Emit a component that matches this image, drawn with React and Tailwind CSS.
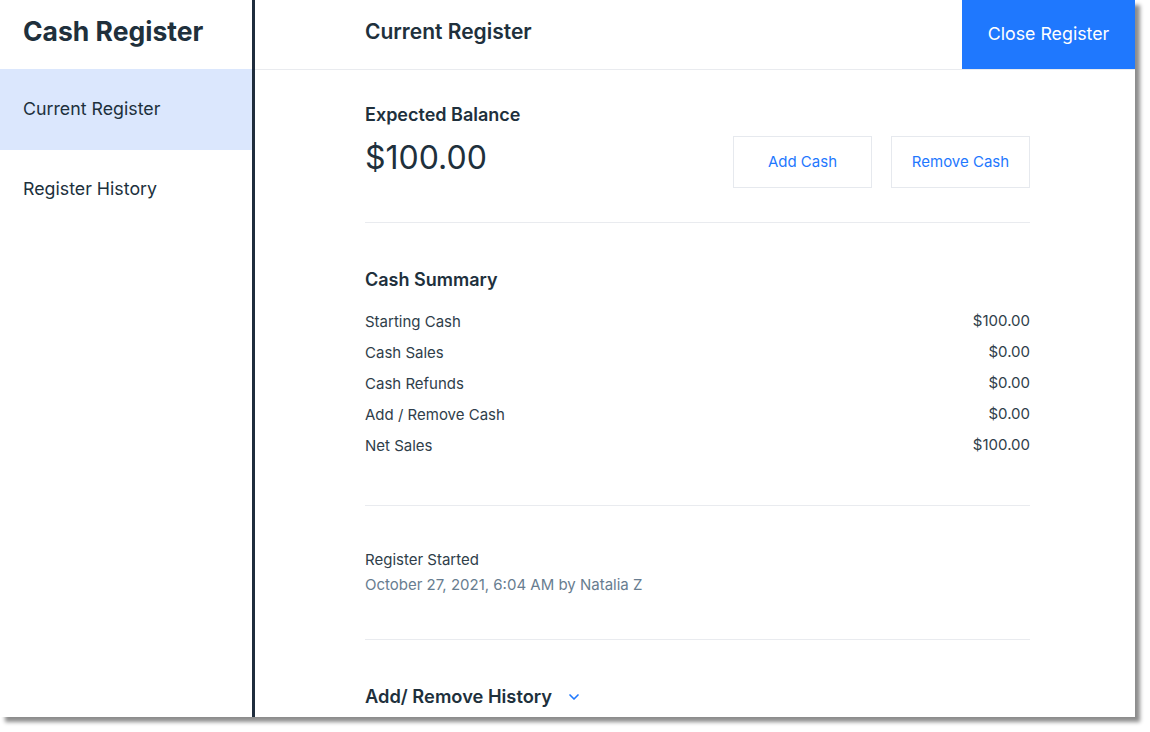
import { ChevronDown } from "lucide-react";

const summaryRows = [
  { label: "Starting Cash", value: "$100.00" },
  { label: "Cash Sales", value: "$0.00" },
  { label: "Cash Refunds", value: "$0.00" },
  { label: "Add / Remove Cash", value: "$0.00" },
  { label: "Net Sales", value: "$100.00" },
];

const App = () => {
  return (
    <div
      className="w-[1150px] h-[732px] bg-white overflow-hidden"
      style={{ fontFamily: "Inter, 'Open Sans', sans-serif" }}
    >
      <div className="w-[1135px] h-[717px] bg-white flex shadow-[5px_5px_4px_rgba(0,0,0,0.45)]">
        {/* sidebar */}
        <aside className="w-[255px] shrink-0 border-r-[3px] border-[#1f2d3d]">
          <div className="h-[69px] flex items-center pl-[23px] pb-[6px]">
            <h1 className="text-[26.5px] font-bold text-[#20303c]">
              Cash Register
            </h1>
          </div>
          <div className="h-[81px] bg-[#dbe7fd] flex items-center pl-[23px] text-[17.8px] text-[#20303c]">
            Current Register
          </div>
          <div className="h-[79px] flex items-center pl-[23px] text-[17.8px] text-[#20303c]">
            Register History
          </div>
        </aside>

        {/* main */}
        <main className="flex-1 flex flex-col">
          <header className="h-[70px] flex border-b border-[#e9ebef]">
            <div className="flex-1 flex items-center pl-[110px] pb-[5px]">
              <h2 className="text-[21px] font-semibold text-[#20303c]">
                Current Register
              </h2>
            </div>
            <button className="w-[173px] h-[69px] bg-[#1f78fe] text-white text-[17.8px] flex items-center justify-center">
              Close Register
            </button>
          </header>

          <div className="pl-[110px] w-[775px] text-[#20303c]">
            <section className="pt-[33px] pb-[34px] border-b border-[#e9ebef] flex items-start justify-between">
              <div>
                <div className="text-[18px] leading-[24px] font-semibold">
                  Expected Balance
                </div>
                <div className="mt-[11px] text-[32px] leading-[40px]">
                  $100.00
                </div>
              </div>
              <div className="mt-[33px] flex gap-[19px]">
                <button className="w-[139px] h-[52px] border border-[#e6e9ee] text-[#1f78fe] text-[15px]">
                  Add Cash
                </button>
                <button className="w-[139px] h-[52px] border border-[#e6e9ee] text-[#1f78fe] text-[15px]">
                  Remove Cash
                </button>
              </div>
            </section>

            <section className="pt-[45px] pb-[43px] border-b border-[#e9ebef]">
              <div className="text-[18px] leading-[24px] font-semibold">
                Cash Summary
              </div>
              <div className="mt-[15px]">
                {summaryRows.map((row) => (
                  <div
                    key={row.label}
                    className="flex justify-between h-[31px] items-center text-[15px] text-[#2f3e4a]"
                  >
                    <span>{row.label}</span>
                    <span className="-mt-[2px]">{row.value}</span>
                  </div>
                ))}
              </div>
            </section>

            <section className="pt-[43px] pb-[43px] border-b border-[#e9ebef]">
              <div className="text-[15px] leading-[22px] text-[#2f3e4a]">
                Register Started
              </div>
              <div className="mt-[3px] text-[15px] leading-[22px] text-[#687d90]">
                October 27, 2021, 6:04 AM by Natalia Z
              </div>
            </section>

            <section className="pt-[44px]">
              <div className="flex items-center gap-[14px]">
                <span className="text-[18.3px] leading-[24px] font-semibold">
                  Add/ Remove History
                </span>
                <ChevronDown size={16} strokeWidth={2.5} className="text-[#1f78fe] mt-[2px]" />
              </div>
            </section>
          </div>
        </main>
      </div>
    </div>
  );
};

export default App;
